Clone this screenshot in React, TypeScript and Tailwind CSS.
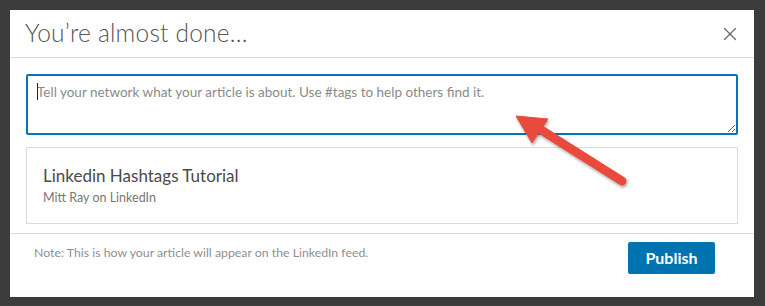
import { X } from "lucide-react";

export default function App() {
  return (
    <div className="h-[306px] w-[765px] bg-[#3b3b3b] p-[10px] font-['Lato',sans-serif]">
      <div className="relative flex h-[287px] w-[744px] flex-col bg-white">
        <div className="flex h-[48px] items-center justify-between border-b border-[#dcdcdc] pl-[15px] pr-[13px]">
          <h1 className="text-[24.5px] font-light tracking-[0.2px] text-[#555]">
            You’re almost done…
          </h1>
          <X size={22} strokeWidth={1.3} className="text-[#666]" />
        </div>

        <div className="flex flex-col gap-[12px] px-[16px] pt-[16px]">
          <div className="relative">
            <textarea
              className="block h-[61px] w-full rounded-[2px] border-2 border-[#0077b5] px-[9px] py-[6px] text-[13.5px] leading-[20px] text-[#333] outline-none placeholder:text-[#8a8a8a]"
              placeholder="Tell your network what your article is about. Use #tags to help others find it."
            />
            <span className="absolute left-[11px] top-[9px] h-[17px] w-px bg-[#222]" />
          </div>

          <div className="flex h-[77px] flex-col justify-center border border-[#dcdcdc] px-[16px]">
            <div className="text-[17px] leading-[22px] text-[#4a4a4a]">
              Linkedin Hashtags Tutorial
            </div>
            <div className="mt-[3px] text-[12.5px] leading-[16px] text-[#777]">
              Mitt Ray on LinkedIn
            </div>
          </div>
        </div>

        <div className="mt-[9px] flex flex-1 items-start justify-between border-t border-[#dcdcdc] pl-[24px] pr-[39px] pt-[8px]">
          <p className="pt-[3px] text-[12.3px] leading-[16px] text-[#8f8f8f]">
            Note: This is how your article will appear on the LinkedIn feed.
          </p>
          <button className="h-[32px] w-[87px] rounded-[2px] bg-[#0073b1] text-[16px] font-bold text-white">
            Publish
          </button>
        </div>

        <svg
          className="pointer-events-none absolute left-[480px] top-[85px]"
          width="150"
          height="100"
          viewBox="0 0 150 100"
        >
          <defs>
            <filter id="sh" x="-20%" y="-20%" width="140%" height="140%">
              <feDropShadow dx="1" dy="2" stdDeviation="1.5" floodColor="#000" floodOpacity="0.35" />
            </filter>
          </defs>
          <g filter="url(#sh)" fill="#e84c3d" stroke="#e84c3d">
            <line x1="48" y1="33" x2="132" y2="86" strokeWidth="9" strokeLinecap="round" />
            <polygon points="26,21 58,24 42,48" strokeWidth="1" strokeLinejoin="round" />
          </g>
        </svg>
      </div>
    </div>
  );
}
